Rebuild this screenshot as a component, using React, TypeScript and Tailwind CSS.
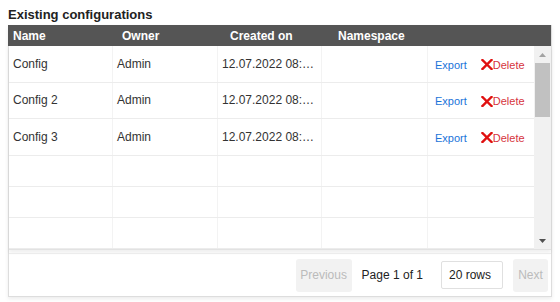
const rows = [
  { name: 'Config', owner: 'Admin', created: '12.07.2022 08:…' },
  { name: 'Config 2', owner: 'Admin', created: '12.07.2022 08:…' },
  { name: 'Config 3', owner: 'Admin', created: '12.07.2022 08:…' },
];

const cell = 'shrink-0 px-[4px] border-r border-[#f3f3f3] flex items-center';

function DeleteIcon() {
  return (
    <svg width="12" height="11" viewBox="0 0 12 11" className="mr-[0px]">
      <path d="M1.5 1 L10.5 10 M10.5 1 L1.5 10" stroke="#e01010" strokeWidth="2.4" strokeLinecap="square" />
    </svg>
  );
}

function DataRow({ name, owner, created }: { name: string; owner: string; created: string }) {
  return (
    <div className="flex h-[36.5px] border-b border-[#ececec] text-[12px] text-[#333]">
      <div className={cell + ' w-[104px]'}>{name}</div>
      <div className={cell + ' w-[105px]'}>{owner}</div>
      <div className={cell + ' w-[104px] truncate'}>{created}</div>
      <div className={cell + ' w-[106px]'} />
      <div className="flex-1 flex items-center pl-[7px] pt-[2px] text-[11px]">
        <button className="text-[#1b74d9] mr-[14px]">Export</button>
        <button className="flex items-center text-[#d6333d]">
          <DeleteIcon />
          Delete
        </button>
      </div>
    </div>
  );
}

function EmptyRow() {
  return (
    <div className="flex h-[31px] border-b border-[#ececec]">
      <div className={cell + ' w-[104px]'} />
      <div className={cell + ' w-[105px]'} />
      <div className={cell + ' w-[104px]'} />
      <div className={cell + ' w-[106px]'} />
      <div className="flex-1" />
    </div>
  );
}

export default function App() {
  return (
    <div className="w-[560px] h-[302px] bg-white font-['Liberation_Sans',Arial,sans-serif]">
      <h2 className="pl-[8px] pt-[5px] h-[25px] text-[13px] font-bold text-[#222]">Existing configurations</h2>
      <div className="ml-[8px] w-[544px] border border-[#ddd] border-t-0 shadow-[0_2px_4px_rgba(0,0,0,0.08)]">
        <div className="flex h-[21px] bg-[#555] text-white text-[12px] font-bold items-center -ml-[1px]">
          <div className="w-[105px] pl-[5px]">Name</div>
          <div className="w-[105px] pl-[9px]">Owner</div>
          <div className="w-[104px] pl-[12px]">Created on</div>
          <div className="w-[106px] pl-[16px]">Namespace</div>
          <div className="flex-1" />
        </div>
        <div className="flex h-[204px] overflow-hidden shadow-[0_3px_3px_rgba(0,0,0,0.06)] border-b border-[#e2e2e2]">
          <div className="flex-1">
            {rows.map((r) => (
              <DataRow key={r.name} {...r} />
            ))}
            <EmptyRow />
            <EmptyRow />
            <EmptyRow />
          </div>
          <div className="w-[17px] bg-[#f1f1f1] flex flex-col items-center">
            <div className="h-[17px] w-full flex items-center justify-center">
              <svg width="7" height="4" viewBox="0 0 7 4"><path d="M0 4 L3.5 0 L7 4 Z" fill="#a3a3a3" /></svg>
            </div>
            <div className="w-[15px] h-[54px] bg-[#c1c1c1]" />
            <div className="flex-1" />
            <div className="h-[17px] w-full flex items-center justify-center">
              <svg width="7" height="4" viewBox="0 0 7 4"><path d="M0 0 L3.5 4 L7 0 Z" fill="#505050" /></svg>
            </div>
          </div>
        </div>
        <div className="flex h-[43px] items-center justify-end pr-[3px] text-[12px] mt-[3px] border-t border-[#ececec]">
          <button className="w-[56px] h-[33px] rounded-[3px] bg-[#f2f2f2] text-[#bbb]">Previous</button>
          <span className="ml-[10px] text-[#222]">Page 1 of 1</span>
          <div className="ml-[18px] w-[62px] h-[28px] border border-[#e0e0e0] rounded-[2px] flex items-center pl-[7px] text-[#222]">20 rows</div>
          <button className="ml-[10px] w-[35px] h-[33px] rounded-[3px] bg-[#f2f2f2] text-[#bbb]">Next</button>
        </div>
      </div>
    </div>
  );
}
